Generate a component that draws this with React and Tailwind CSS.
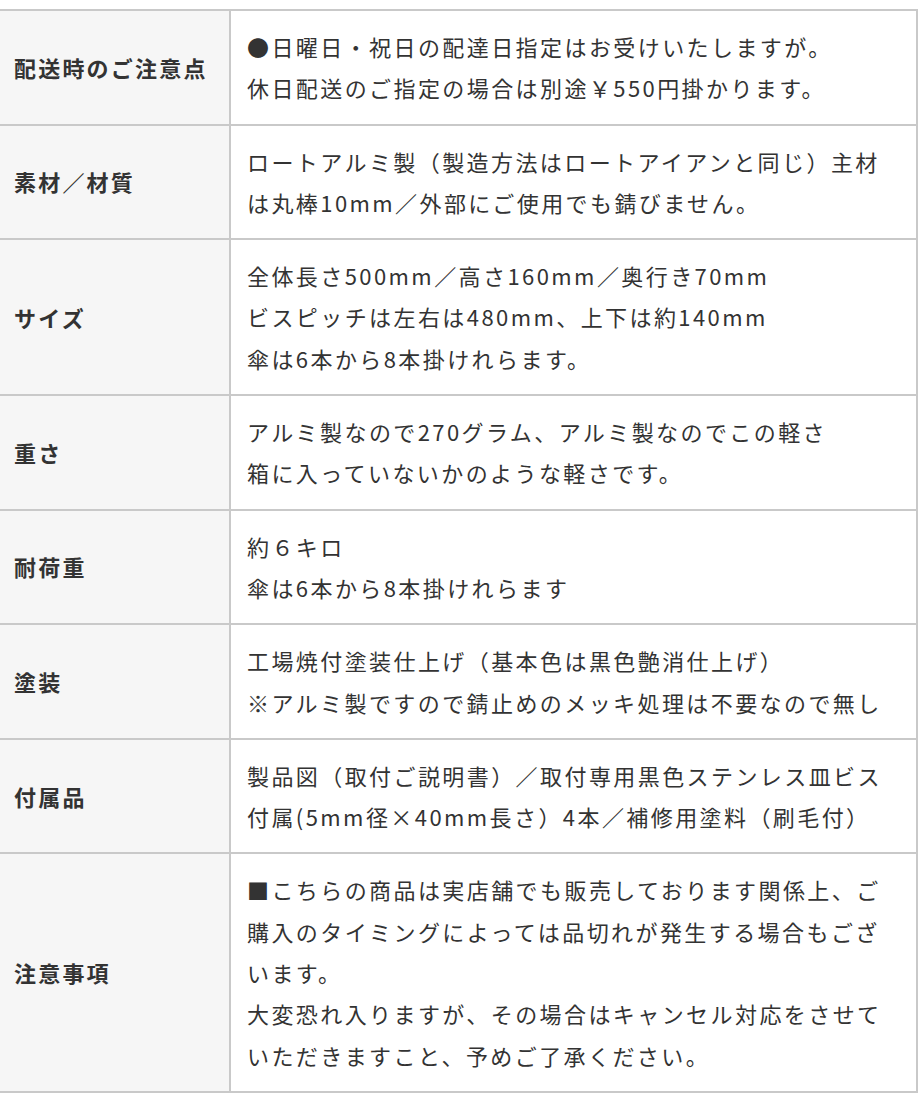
const rows = [
  {
    label: '配送時のご注意点',
    lines: ['●日曜日・祝日の配達日指定はお受けいたしますが。', '休日配送のご指定の場合は別途￥550円掛かります。'],
  },
  {
    label: '素材／材質',
    lines: ['ロートアルミ製（製造方法はロートアイアンと同じ）主材', 'は丸棒10mm／外部にご使用でも錆びません。'],
  },
  {
    label: 'サイズ',
    lines: ['全体長さ500mm／高さ160mm／奥行き70mm', 'ビスピッチは左右は480mm、上下は約140mm', '傘は6本から8本掛けれらます。'],
  },
  {
    label: '重さ',
    lines: ['アルミ製なので270グラム、アルミ製なのでこの軽さ', '箱に入っていないかのような軽さです。'],
  },
  {
    label: '耐荷重',
    lines: ['約６キロ', '傘は6本から8本掛けれらます'],
  },
  {
    label: '塗装',
    lines: ['工場焼付塗装仕上げ（基本色は黒色艶消仕上げ）', '※アルミ製ですので錆止めのメッキ処理は不要なので無し'],
  },
  {
    label: '付属品',
    lines: ['製品図（取付ご説明書）／取付専用黒色ステンレス皿ビス', '付属(5mm径×40mm長さ）4本／補修用塗料（刷毛付）'],
  },
  {
    label: '注意事項',
    lines: [
      '■こちらの商品は実店舗でも販売しております関係上、ご',
      '購入のタイミングによっては品切れが発生する場合もござ',
      'います。',
      '大変恐れ入りますが、その場合はキャンセル対応をさせて',
      'いただきますこと、予めご了承ください。',
    ],
  },
];

export default function App() {
  return (
    <div
      className="w-[920px] h-[1104px] bg-white overflow-hidden pt-[9px]"
      style={{ fontFamily: '"Noto Sans CJK JP", "Noto Sans", sans-serif' }}
    >
      <table className="ml-[-2px] w-[920px] border-collapse text-[22px] text-[#333] tracking-[0.11em]">
        <tbody>
          {rows.map((row, i) => (
            <tr key={i}>
              <th className="w-[231px] border-2 border-[#c9c9c9] bg-[#f6f6f6] pl-[14px] text-left align-middle font-bold whitespace-nowrap tracking-[0.1em]">
                {row.label}
              </th>
              <td className="border-2 border-[#c9c9c9] bg-white pl-[16px] py-[15px] leading-[41.3px] align-middle">
                {row.lines.map((line, j) => (
                  <div key={j} className="whitespace-nowrap">{line}</div>
                ))}
              </td>
            </tr>
          ))}
        </tbody>
      </table>
    </div>
  );
}
